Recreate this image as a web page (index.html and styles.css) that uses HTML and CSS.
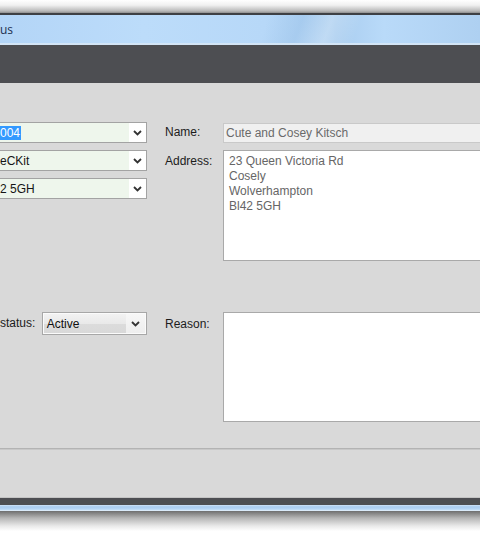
FILE: index.html
```html
<!DOCTYPE html>
<html>
<head>
<meta charset="utf-8">
<link rel="stylesheet" href="styles.css">
</head>
<body>
<div class="screen">
  <div class="shadow-top"></div>
  <div class="frame-edge"></div>
  <div class="titlebar"><span class="title">us</span></div>
  <div class="title-rule"></div>
  <div class="toolbar"></div>
  <div class="client">
    <div class="upper">
      <div class="combo combo-green r1"><span class="value"><span class="sel">004</span></span><span class="btn"><svg width="9" height="6" viewBox="0 0 9 6"><polyline points="1,1 4.5,4.5 8,1" fill="none" stroke="#333" stroke-width="1.8"/></svg></span></div>
      <div class="label r1l">Name:</div>
      <div class="namebox">Cute and Cosey Kitsch</div>

      <div class="combo combo-green r2"><span class="value">eCKit</span><span class="btn"><svg width="9" height="6" viewBox="0 0 9 6"><polyline points="1,1 4.5,4.5 8,1" fill="none" stroke="#333" stroke-width="1.8"/></svg></span></div>
      <div class="label r2l">Address:</div>
      <div class="address">23 Queen Victoria Rd<br>Cosely<br>Wolverhampton<br>Bl42 5GH</div>

      <div class="combo combo-green r3"><span class="value">2 5GH</span><span class="btn"><svg width="9" height="6" viewBox="0 0 9 6"><polyline points="1,1 4.5,4.5 8,1" fill="none" stroke="#333" stroke-width="1.8"/></svg></span></div>
    </div>

    <div class="lower">
      <div class="status-cell">
        <span class="label status-label">status:</span>
        <div class="combo combo-gray"><span class="value">Active</span><span class="btn"><svg width="9" height="6" viewBox="0 0 9 6"><polyline points="1,1 4.5,4.5 8,1" fill="none" stroke="#333" stroke-width="1.8"/></svg></span></div>
      </div>
      <div class="label reason-label">Reason:</div>
      <div class="reason"></div>
    </div>

    <div class="separator"></div>
    <div class="footer"></div>
  </div>
  <div class="bottom-dark"></div>
  <div class="bottom-blue"></div>
  <div class="shadow-bottom"></div>
</div>
</body>
</html>
```

FILE: styles.css
```css
html, body {
  margin: 0;
  padding: 0;
  background: #ffffff;
  overflow: hidden;
}
.screen {
  width: 480px;
  height: 539px;
  overflow: hidden;
  font-family: "Liberation Sans", Arial, sans-serif;
  font-size: 12px;
  color: #1b1b1b;
}
.shadow-top {
  height: 13px;
  background: linear-gradient(#ffffff 0%, #f0f0f0 40%, #b8b8b8 85%, #8c8c8c 100%);
}
.frame-edge {
  height: 2px;
  background: #3e4044;
}
.titlebar {
  height: 28px;
  display: flex;
  align-items: center;
  background:
    linear-gradient(110deg, rgba(255,255,255,0) 0%, rgba(255,255,255,0) 55%, rgba(150,190,230,0.35) 62%, rgba(255,255,255,0.25) 68%, rgba(255,255,255,0) 74%),
    linear-gradient(90deg, #b3d5f7 0%, #bcdcfa 30%, #b7d8f8 55%, #a9cdef 70%, #b9daf9 80%, #aed0f1 100%);
}
.title {
  font-family: "Open Sans", "DejaVu Sans", sans-serif;
  font-size: 12px;
  color: #1e3050;
  margin-top: 1px;
}
.title-rule {
  height: 2px;
  background: #d3e5f6;
}
.toolbar {
  height: 38px;
  background: #4d4e52;
}
.client {
  height: 415px;
  background: #d9d9d9;
  display: flex;
  flex-direction: column;
}
.upper {
  margin-top: 39px;
  margin-left: -4px;
  display: grid;
  grid-template-columns: 151px 76px 300px;
  grid-template-rows: 21px 21px 21px 55px;
  row-gap: 7px;
}
.label {
  line-height: 21px;
  padding-left: 18px;
  white-space: nowrap;
  color: #1c1c1c;
}
.r1 { grid-column: 1; grid-row: 1; }
.r2 { grid-column: 1; grid-row: 2; }
.r3 { grid-column: 1; grid-row: 3; }
.r1l { grid-column: 2; grid-row: 1; }
.r2l { grid-column: 2; grid-row: 2; padding-top: 1px; }
.namebox {
  grid-column: 3;
  grid-row: 1;
  box-sizing: border-box;
  border: 1px solid #c9c9c9;
  background: #f0f0f0;
  color: #6a6a6a;
  padding-left: 2px;
  line-height: 19px;
  margin-top: 1px;
  height: 20px;
}
.address {
  grid-column: 3;
  grid-row: 2 / 5;
  box-sizing: border-box;
  border: 1px solid #a9a9a9;
  background: #ffffff;
  color: #666666;
  padding: 3px 0 0 5px;
  line-height: 15px;
  height: 111px;
}
.combo {
  box-sizing: border-box;
  display: flex;
  border: 1px solid #a3a3a3;
}
.combo .value {
  flex: 1;
  display: flex;
  align-items: center;
  white-space: nowrap;
  overflow: hidden;
}
.combo .btn {
  width: 17px;
  display: flex;
  align-items: center;
  justify-content: center;
}
.combo-green {
  height: 21px;
  background: #eef6ec;
}
.combo-green .value {
  padding-left: 3px;
  color: #151515;
}
.combo-green .btn {
  background: #ffffff;
}
.sel {
  background: #3399ff;
  color: #ffffff;
  line-height: 14px;
  padding-right: 1px;
}
.lower {
  margin-top: 51px;
  display: grid;
  grid-template-columns: 147px 76px 300px;
  grid-template-rows: 110px;
}
.status-cell {
  display: flex;
  align-items: flex-start;
}
.status-label {
  padding-left: 0;
  width: 42px;
  line-height: 23px;
}
.combo-gray {
  width: 106px;
  height: 23px;
  border-color: #a7a7a7;
  box-shadow: inset 0 0 0 1px #fbfbfb;
  background: linear-gradient(#f3f3f3, #e9e9e9 50%, #dcdcdc 51%, #d8d8d8);
}
.combo-gray .value {
  padding-left: 4px;
  color: #0f0f0f;
}
.combo-gray .btn {
  width: 19px;
  background: linear-gradient(#f7f7f7, #eeeeee);
  margin: 1px 1px 1px 0;
}
.reason-label {
  line-height: 23px;
  padding-top: 1px;
}
.reason {
  box-sizing: border-box;
  border: 1px solid #a9a9a9;
  background: #ffffff;
  height: 110px;
}
.separator {
  margin-top: 26px;
  height: 1px;
  background: #b3b3b3;
  border-bottom: 1px solid #c8c8c8;
}
.footer {
  flex: 1;
  border-bottom: 1px solid #c4c4c4;
}
.bottom-dark {
  height: 7px;
  background: #4d4e52;
}
.bottom-blue {
  height: 6px;
  background: linear-gradient(#cfe3f7 0%, #a9cbef 30%, #b6d6f6 70%, #e8f2fb 100%);
}
.shadow-bottom {
  height: 20px;
  background: linear-gradient(#6e6e6e, #b5b5b5 35%, #e9e9e9 75%, #ffffff);
}
```
